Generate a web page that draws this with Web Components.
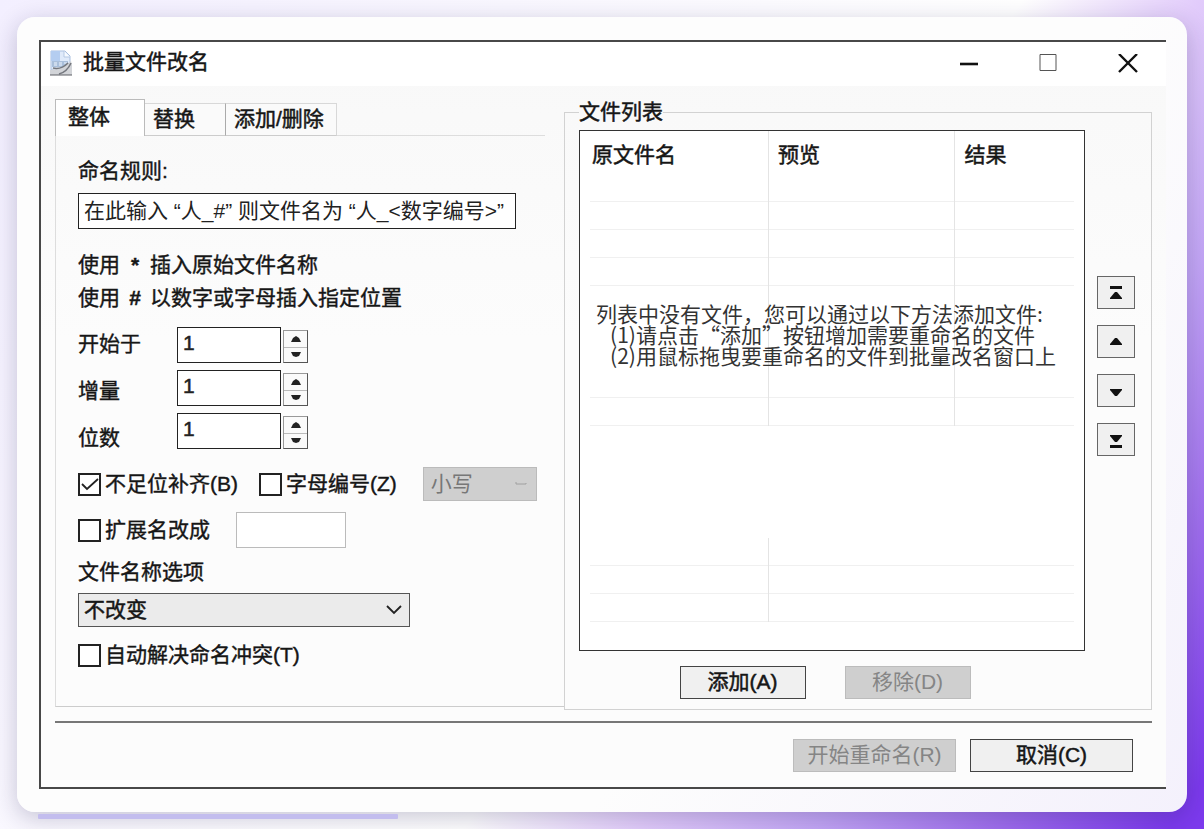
<!DOCTYPE html>
<html lang="zh-CN">
<head>
<meta charset="utf-8">
<meta name="viewport" content="width=device-width, initial-scale=1">
<title>批量文件改名</title>
<style>
  html { min-height: 100%; background: linear-gradient(124deg, #f3efff 0%, #ffffff 58%, #e2ccfb 68%, #c3a6f6 78%, #a06fee 88%, #7c3aed 98%); }
  body { margin: 0; padding: 17px 17px 10px; font: 21px/28px "Liberation Sans", "Noto Sans CJK SC", sans-serif; color: #161616; }
</style>
</head>
<body>
<page-card>
  <app-window>
    <span slot="title">批量文件改名</span>
    <rename-tabs></rename-tabs>
    <file-group></file-group>
    <dlg-button slot="actions" wide disabled>开始重命名(R)</dlg-button>
    <dlg-button slot="actions" wide>取消(C)</dlg-button>
  </app-window>
</page-card>

<script>
class Base extends HTMLElement {
  constructor() {
    super();
    const t = document.createElement('template');
    t.innerHTML = '<style>*{box-sizing:border-box}</style>' + this.render();
    this.attachShadow({ mode: 'open' }).append(t.content.cloneNode(true));
  }
}

customElements.define('page-card', class extends Base {
  render() { return `
    <style>
      :host { display: block; }
      .card { padding: 23px 21px 23px 22px; border-radius: 18px;
        background: linear-gradient(124deg, #fdfdfd 65%, #f4f1fc);
        box-shadow: 0 6px 24px rgba(30, 27, 75, .24); }
      .bar { position: relative; width: 360px; max-width: 60%; height: 5px; margin: 2px 0 0 21px; background: #c3bdee; border-radius: 1px; }
    </style>
    <div class="card"><slot></slot></div>
    <div class="bar"></div>`; }
});

customElements.define('app-window', class extends Base {
  render() { return `
    <style>
      :host { display: block; border: 2px solid #484848; border-right: 0; background: linear-gradient(#f8f8f8, #fcfcfc 40%); }
      header { display: flex; align-items: center; height: 44px; padding-left: 8px; background: #fff; }
      h1 { flex: 1; margin: 0 0 4px 10px; font: inherit; -webkit-text-stroke: 0.5px; }
      header button { display: grid; place-items: center; width: 79px; height: 42px; padding: 0; border: 0; background: none; }
      svg { display: block; }
      .icon { margin-bottom: 3px; }
      main { display: grid; grid-template-columns: 509fr 588fr; align-items: start; padding: 13px 14px 0; }
      footer { display: flex; justify-content: flex-end; gap: 14px; margin: 11px 14px 0; padding: 16px 19px 15px 0; border-top: 2px solid #777; }
    </style>
    <header>
      <svg class="icon" width="24" height="26" viewBox="0 0 24 26" aria-hidden="true">
        <path d="M2 1h14l5 5v14H2z" fill="#dfeafa" stroke="#a9bfdf"/>
        <path d="M2 1h9v10H2z" fill="#b4cdf0"/><path d="M15 1v6h6" fill="#f6faff" stroke="#b5c8e2"/>
        <path d="M3 11h16v6H3z" fill="#a9bfdb"/><path d="M5 13h3m2 0h3m2 0h3M5 15h3m2 0h3" stroke="#eef5ff"/>
        <path d="M1 20l12-2 9-7 1 4v10H1z" fill="#d2d4d8"/>
        <path d="M10 24q8-2 12-11M4 18q8 2 15-5" fill="none" stroke="#74777e" stroke-width="1.6"/>
        <path d="M1 25h22" stroke="#5d5f64"/>
      </svg>
      <h1><slot name="title"></slot></h1>
      <button aria-label="最小化"><svg width="20" height="20"><path d="M1 10h18" stroke="#111" stroke-width="2.6"/></svg></button>
      <button aria-label="最大化"><svg width="20" height="20"><path d="M2 .5h16v16h-16z" fill="none" stroke="#555"/></svg></button>
      <button aria-label="关闭"><svg width="22" height="20"><path d="M3 0l18 18M21 0L3 18" stroke="#111" stroke-width="2.4"/></svg></button>
    </header>
    <main><slot></slot></main>
    <footer><slot name="actions"></slot></footer>`; }
});

customElements.define('dlg-button', class extends Base {
  static observedAttributes = ['disabled'];
  attributeChangedCallback() { this.shadowRoot.querySelector('button').disabled = this.hasAttribute('disabled'); }
  render() { return `
    <style>
      :host { display: block; width: 126px; }
      :host([wide]) { width: 163px; }
      :host([small]) { width: 38px; }
      button { display: flex; align-items: center; justify-content: center; width: 100%; height: 33px; padding: 0 0 2px; border: 1px solid #444; background: #f0f0f0; color: inherit; font: inherit; white-space: nowrap; -webkit-text-stroke: 0.5px; }
      :host([small]) button { padding: 0; border-color: #666; }
      button:disabled { border-color: #bcbcbc; background: #cfcfcf; color: #858585; -webkit-text-stroke: 0; }
    </style>
    <button><slot></slot></button>`; }
});

customElements.define('spin-box', class extends Base {
  render() { return `
    <style>
      :host { display: flex; align-items: flex-end; gap: 2px; height: 36px; }
      .spin { display: grid; grid-template-rows: 1fr 1fr; width: 25px; height: 33px; border: 1px solid #999; border-bottom-color: #555; border-right-color: #555; }
      button { display: grid; place-items: center; padding: 0; border: 0; background: #fafafa; }
      button + button { border-top: 1px solid #bbb; }
    </style>
    <slot></slot>
    <div class="spin">
      <button aria-label="增加"><svg width="10" height="6"><path d="M0 6l2-4 3-2 3 2 2 4z" fill="#222"/></svg></button>
      <button aria-label="减少"><svg width="10" height="6"><path d="M0 0l2 4 3 1 3-1 2-4z" fill="#222"/></svg></button>
    </div>`; }
});

customElements.define('rename-tabs', class extends Base {
  render() { return `
    <style>
      :host { display: block; min-width: 0; }
      nav { display: flex; align-items: flex-end; height: 37px; }
      nav button { display: block; height: 33px; padding: 0 8px 1px; border: 1px solid #d8d8d8; border-left: 0; border-bottom-color: #ccc; background: #fafafa; color: inherit; font: inherit; text-align: left; -webkit-text-stroke: 0.5px; }
      nav button:nth-child(1) { width: 90px; height: 37px; padding: 0 12px 3px; border: 1px solid #bbb; border-bottom: 0; background: #fff; }
      nav button:nth-child(2) { width: 81px; border-right-color: #aaa; }
      nav button:nth-child(3) { width: 111px; }
      nav::after { content: ""; flex: 0 1 208px; height: 1px; background: #ddd; }
      .panel { padding: 21px 22px 37px; border: solid #ccc; border-width: 0 0 1px 1px; border-left-color: #ddd; }
      label, p { display: block; margin: 0; -webkit-text-stroke: 0.4px; white-space: nowrap; }
      input[type=text] { display: block; height: 36px; margin: 0; padding: 0 5px 4px; border: 1px solid #222; border-radius: 0; background: #fff; color: #222; font: inherit; outline: 0; }
      #rule { width: 438px; max-width: 100%; margin-top: 8px; }
      .hints { padding-top: 19px; line-height: 33px; }
      .mark { display: inline-block; width: 30px; text-align: center; white-space: pre; font-weight: bold; }
      .numbers { display: grid; grid-template-columns: 99px auto; justify-content: start; padding: 6px 0 5px; }
      .numbers label { line-height: 47px; }
      .fields { display: flex; flex-direction: column; gap: 7px; padding-top: 7px; }
      .fields input[type=text] { width: 104px; -webkit-text-stroke: 0.5px; }
      .row { display: flex; align-items: center; height: 36px; }
      .check { display: flex; align-items: center; gap: 4px; }
      .check + .check { margin-left: 21px; }
      .check input { appearance: none; flex: none; width: 23px; height: 23px; margin: 0; border: 2px solid #222; background: #fff; }
      .check input:checked { background: #fff url("data:image/svg+xml,%3Csvg xmlns='http://www.w3.org/2000/svg' viewBox='0 0 19 19'%3E%3Cpath d='M2 9l5 5L18 4' fill='none' stroke='%23222' stroke-width='1.8'/%3E%3C/svg%3E"); }
      select { appearance: none; display: block; height: 34px; margin: 0; padding: 0 5px 1px; border: 1px solid #555; border-radius: 0; color: inherit; font: inherit; -webkit-text-stroke: 0.5px;
        background: #ebebeb url("data:image/svg+xml,%3Csvg xmlns='http://www.w3.org/2000/svg' width='16' height='10'%3E%3Cpath d='M1 1l7 7 7-7' fill='none' stroke='%23222' stroke-width='1.8'/%3E%3C/svg%3E") no-repeat right 7px center; }
      #case { width: 114px; margin-left: 26px; padding-left: 7px; border-color: #bbb; color: #777; opacity: 1; -webkit-text-stroke: 0;
        background: #cfcfcf url("data:image/svg+xml,%3Csvg xmlns='http://www.w3.org/2000/svg' width='12' height='6'%3E%3Cpath d='M1 1v2h10v-1' fill='none' stroke='%23a0a0a0'/%3E%3C/svg%3E") no-repeat right 9px center; }
      .ext { margin: 10px 0; }
      #ext { width: 110px; margin-left: 26px; border-color: #bbb; }
      #option { width: 332px; margin: 7px 0 14px; }
      .last { height: 28px; }
    </style>
    <nav role="tablist">
      <button role="tab" aria-selected="true">整体</button>
      <button role="tab">替换</button>
      <button role="tab">添加/删除</button>
    </nav>
    <div class="panel" role="tabpanel">
      <label for="rule">命名规则:</label>
      <input type="text" id="rule" value="在此输入 “人_#” 则文件名为 “人_<数字编号>”">
      <div class="hints">
        <p>使用<span class="mark"> * </span>插入原始文件名称</p>
        <p>使用<span class="mark"> # </span>以数字或字母插入指定位置</p>
      </div>
      <div class="numbers">
        <div><label for="start">开始于</label><label for="step">增量</label><label for="digits">位数</label></div>
        <div class="fields">
          <spin-box><input type="text" inputmode="numeric" id="start" value="1"></spin-box>
          <spin-box><input type="text" inputmode="numeric" id="step" value="1"></spin-box>
          <spin-box><input type="text" inputmode="numeric" id="digits" value="1"></spin-box>
        </div>
      </div>
      <div class="row">
        <label class="check"><input type="checkbox" checked>不足位补齐(B)</label>
        <label class="check"><input type="checkbox">字母编号(Z)</label>
        <select id="case" aria-label="字母大小写" disabled><option>小写</option></select>
      </div>
      <div class="row ext">
        <label class="check"><input type="checkbox">扩展名改成</label>
        <input type="text" id="ext" aria-label="扩展名">
      </div>
      <label for="option">文件名称选项</label>
      <select id="option"><option>不改变</option></select>
      <label class="check last"><input type="checkbox">自动解决命名冲突(T)</label>
    </div>`; }
});

customElements.define('file-list', class extends Base {
  render() {
    const horizontal = [1, 2, 3, 4, 8, 9, 14, 15, 16];
    let rows = '';
    for (let i = 1; i <= 16; i++) {
      const c = (horizontal.includes(i) ? 'h ' : '') + (i <= 9 ? 'v' : i >= 14 ? 'first' : '');
      rows += `<tr class="${c}"><td></td><td></td><td></td></tr>`;
    }
    return `
    <style>
      :host { display: block; position: relative; min-width: 0; padding-bottom: 28px; border: 1px solid #333; background: #fff; }
      table { width: 100%; border-collapse: separate; border-spacing: 0; table-layout: fixed; }
      th { height: 43px; padding: 10px 10px 0 12px; font: inherit; text-align: left; vertical-align: top; -webkit-text-stroke: 0.5px; }
      th + th { padding-left: 9px; }
      th:nth-child(-n+2), .v td:nth-child(-n+2), .first td:first-child { border-right: 1px solid #e4e4e4; }
      td { height: 28px; padding: 0; }
      .h td { background: linear-gradient(#f0f0f0, #f0f0f0) no-repeat center bottom / 100% 1px; }
      .h td:first-child { background-position: right bottom; background-size: calc(100% - 10px) 1px; }
      .h td:last-child { background-position: left bottom; background-size: calc(100% - 10px) 1px; }
      .empty { position: absolute; top: 172px; left: 16px; margin: 0; font: 21px/21px "Noto Sans CJK SC", sans-serif; color: #333; white-space: pre; }
    </style>
    <table>
      <colgroup><col style="width:189px"><col style="width:37%"><col></colgroup>
      <thead><tr><th>原文件名</th><th>预览</th><th>结果</th></tr></thead>
      <tbody>${rows}</tbody>
    </table>
    <p class="empty">列表中没有文件，您可以通过以下方法添加文件:
   (1)请点击“添加”按钮增加需要重命名的文件
   (2)用鼠标拖曳要重命名的文件到批量改名窗口上</p>`;
  }
});

customElements.define('file-group', class extends Base {
  render() {
    const up = '<path d="M1 12l5-6h2l5 6v1H1z"/>', down = '<path d="M1 8h12v1l-5 6H6L1 9z"/>';
    const icon = (s) => `<svg width="14" height="20" fill="#111" style="display:block">${s}</svg>`;
    return `
    <style>
      :host { display: block; min-width: 0; }
      fieldset { min-width: 0; margin: 0; padding: 5px 16px 10px 14px; border: 1px solid #d2d2d2; }
      legend { padding: 0; line-height: 26px; -webkit-text-stroke: 0.5px; }
      .top { display: grid; grid-template-columns: 1fr 38px; gap: 12px; }
      .order { display: flex; flex-direction: column; gap: 16px; padding-top: 146px; }
      .actions { display: flex; justify-content: center; gap: 39px; padding: 15px 64px 0 0; }
    </style>
    <fieldset>
      <legend>文件列表</legend>
      <div class="top">
        <file-list></file-list>
        <div class="order">
          <dlg-button small title="移到顶部">${icon('<path d="M1 3h12v3H1z"/><path d="M1 15l5-6h2l5 6v1H1z"/>')}</dlg-button>
          <dlg-button small title="上移">${icon(up)}</dlg-button>
          <dlg-button small title="下移">${icon(down)}</dlg-button>
          <dlg-button small title="移到底部">${icon('<path d="M1 5h12v1l-5 6H6L1 6z"/><path d="M1 15h12v3H1z"/>')}</dlg-button>
        </div>
      </div>
      <div class="actions">
        <dlg-button>添加(A)</dlg-button>
        <dlg-button disabled>移除(D)</dlg-button>
      </div>
    </fieldset>`;
  }
});
</script>
</body>
</html>
